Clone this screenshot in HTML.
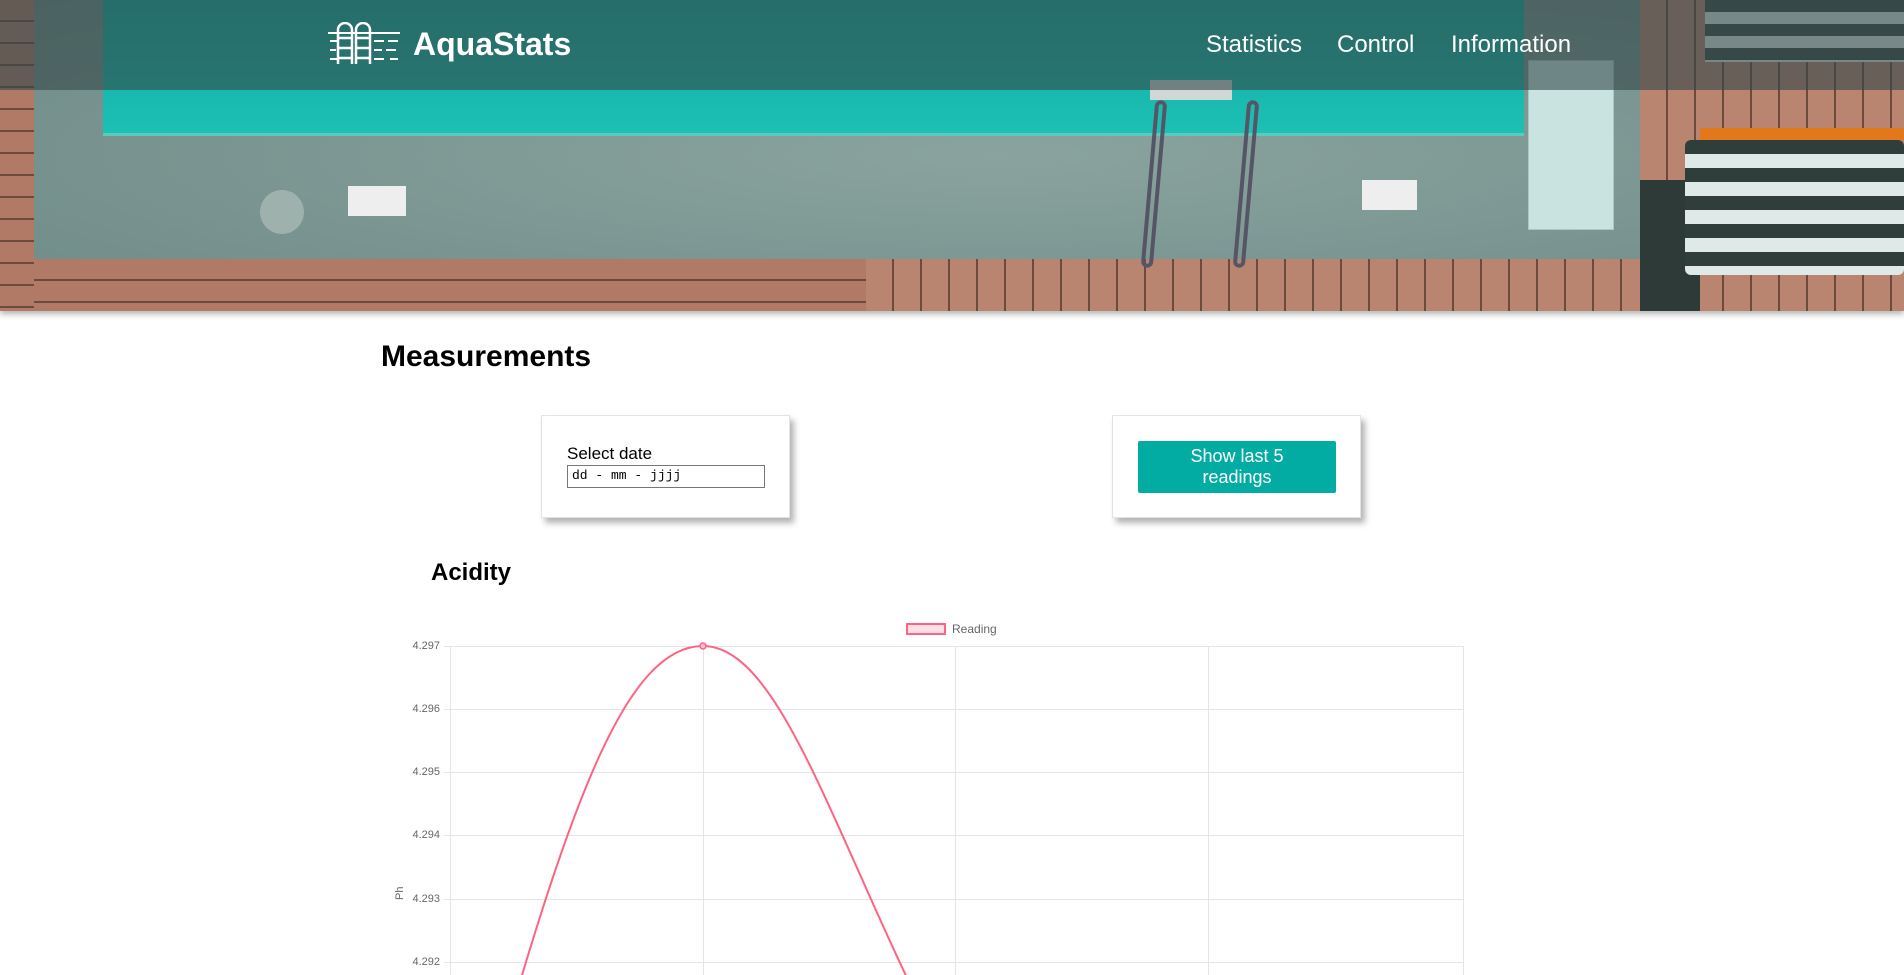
<!DOCTYPE html>
<html><head><meta charset="utf-8"><style>
*{margin:0;padding:0;box-sizing:border-box}
html,body{width:1904px;height:975px;overflow:hidden}
body{background:#fff;font-family:"Liberation Sans",sans-serif;position:relative}
.a{position:absolute}
.hero{left:0;top:0;width:1904px;height:311px;overflow:hidden;box-shadow:0 3px 6px rgba(0,0,0,.3)}
.wood{background:repeating-linear-gradient(90deg,#b98470 0 26px,#6d4a3e 26px 28px)}
.woodh{background:repeating-linear-gradient(180deg,#b07a66 0 20px,#6d4a3e 20px 22px)}
.nav a{color:#fff;text-decoration:none;font-size:24px;position:absolute;top:30px}
.card{background:#fff;border:1px solid #e3e3e3;box-shadow:4px 5px 6px rgba(0,0,0,.3)}
.lbl{font-size:11px;color:#666;position:absolute;right:1464px;text-align:right}
</style></head><body>
<div class="a hero">
  <div class="a" style="left:0;top:0;width:1904px;height:311px;background:#7d9792"></div>
  <div class="a woodh" style="left:0;top:0;width:34px;height:311px"></div>
  <div class="a" style="left:34px;top:0;width:1606px;height:259px;background:radial-gradient(ellipse at 60% 60%,#8aa39f,#6f8b87)"></div>
  <div class="a" style="left:103px;top:0;width:1421px;height:136px;background:linear-gradient(180deg,#15a79f,#1cc0b5);border-bottom:3px solid #5cc9bf"></div>
  <div class="a" style="left:1528px;top:60px;width:86px;height:170px;background:#c9e3e0;border:1px solid #a9c9c4"></div>
  <div class="a woodh" style="left:34px;top:259px;width:832px;height:52px"></div>
  <div class="a wood" style="left:866px;top:259px;width:774px;height:52px"></div>
  <div class="a wood" style="left:1640px;top:0;width:264px;height:311px"></div>
  <div class="a" style="left:1640px;top:180px;width:60px;height:131px;background:#2e3a38"></div>
  <div class="a" style="left:1705px;top:0;width:199px;height:62px;background:repeating-linear-gradient(180deg,#3d4a48 0 12px,#dfe9e7 12px 24px)"></div>
  <div class="a" style="left:1700px;top:128px;width:204px;height:12px;background:#e2781c"></div>
  <div class="a" style="left:1685px;top:140px;width:219px;height:135px;background:repeating-linear-gradient(180deg,#2f3d3b 0 14px,#dfe9e7 14px 28px);border-radius:6px"></div>
  <div class="a" style="left:1150px;top:80px;width:82px;height:20px;background:#cfd8d6"></div>
  <div class="a" style="left:1148px;top:100px;width:12px;height:168px;border:4px solid #556;border-radius:6px;transform:rotate(5deg)"></div>
  <div class="a" style="left:1240px;top:100px;width:12px;height:168px;border:4px solid #556;border-radius:6px;transform:rotate(5deg)"></div>
  <div class="a" style="left:260px;top:190px;width:44px;height:44px;border-radius:50%;background:#9fb1ad"></div>
  <div class="a" style="left:348px;top:186px;width:58px;height:30px;background:#eee"></div>
  <div class="a" style="left:1362px;top:180px;width:55px;height:30px;background:#eee"></div>
  <div class="a" style="left:0;top:0;width:1904px;height:90px;background:rgba(50,72,72,.6)"></div>
  <svg class="a" style="left:328px;top:22px" width="72" height="44" viewBox="0 0 72 44" fill="none" stroke="#fff" stroke-width="2.5">
    <path d="M10 42V8a7 7 0 0 1 14 0v34M10 16h14M10 26h14M10 36h14M24 42V8"/>
    <path d="M28 42V8a7 7 0 0 1 14 0v34M28 16h14M28 26h14M28 36h14"/>
    <path d="M0 11h72M2 19h8M2 28h6M2 37h8M46 19h10M60 19h10M46 28h8M58 28h10M46 37h10M62 37h8" stroke-width="2"/>
  </svg>
  <div class="a" style="left:413px;top:26px;color:#fff;font-size:32px;font-weight:bold">AquaStats</div>
  <div class="nav"><a style="left:1206px;top:31px">Statistics</a><a style="left:1337px;top:31px">Control</a><a style="left:1451px;top:31px">Information</a></div>
</div>
<div class="a" style="left:381px;top:340px;font-size:30px;font-weight:bold;color:#000">Measurements</div>
<div class="a card" style="left:541px;top:415px;width:249px;height:103px">
  <div class="a" style="left:25px;top:28px;font-size:17px">Select date</div>
  <div class="a" style="left:25px;top:49px;width:198px;height:23px;border:1px solid #777;font-family:'Liberation Mono',monospace;font-size:13px;padding:2px 4px">dd - mm - jjjj</div>
</div>
<div class="a card" style="left:1112px;top:415px;width:249px;height:103px">
  <div class="a" style="left:25px;top:25px;width:198px;height:52px;background:#03aca2;border-radius:2px;color:#fff;font-size:18px;text-align:center;line-height:21px;padding-top:5px">Show last 5<br>readings</div>
</div>
<div class="a" style="left:431px;top:559px;font-size:24px;font-weight:bold">Acidity</div>
<div class="a" style="left:906px;top:623px;width:40px;height:12px;border:2px solid #ff6384;background:rgba(255,99,132,.2)"></div>
<div class="a" style="left:952px;top:622px;font-size:12px;color:#666">Reading</div>
<svg class="a" style="left:0;top:0" width="1904" height="975">
  <g stroke="#e5e5e5" stroke-width="1">
    <path d="M444 646.5H1463M444 709.5H1463M444 772.5H1463M444 835.5H1463M444 899.5H1463M444 962.5H1463"/>
    <path d="M450.5 646V975M703.5 646V975M955.5 646V975M1208.5 646V975M1463.5 646V975"/>
  </g>
  <path d="M497 1060C572 800 627 646 703 646C783 646 838 850 943 1050" fill="none" stroke="#ff6384" stroke-width="2"/>
  <circle cx="703" cy="646" r="3" fill="#fbd" stroke="#ff6384" stroke-width="1.5"/>
  <text x="397" y="906" font-size="11" fill="#666" transform="rotate(-90 397 900)" font-family="Liberation Sans">Ph</text>
</svg>
<div class="lbl" style="top:640px">4.297</div>
<div class="lbl" style="top:703px">4.296</div>
<div class="lbl" style="top:766px">4.295</div>
<div class="lbl" style="top:829px">4.294</div>
<div class="lbl" style="top:893px">4.293</div>
<div class="lbl" style="top:956px">4.292</div>
</body></html>
